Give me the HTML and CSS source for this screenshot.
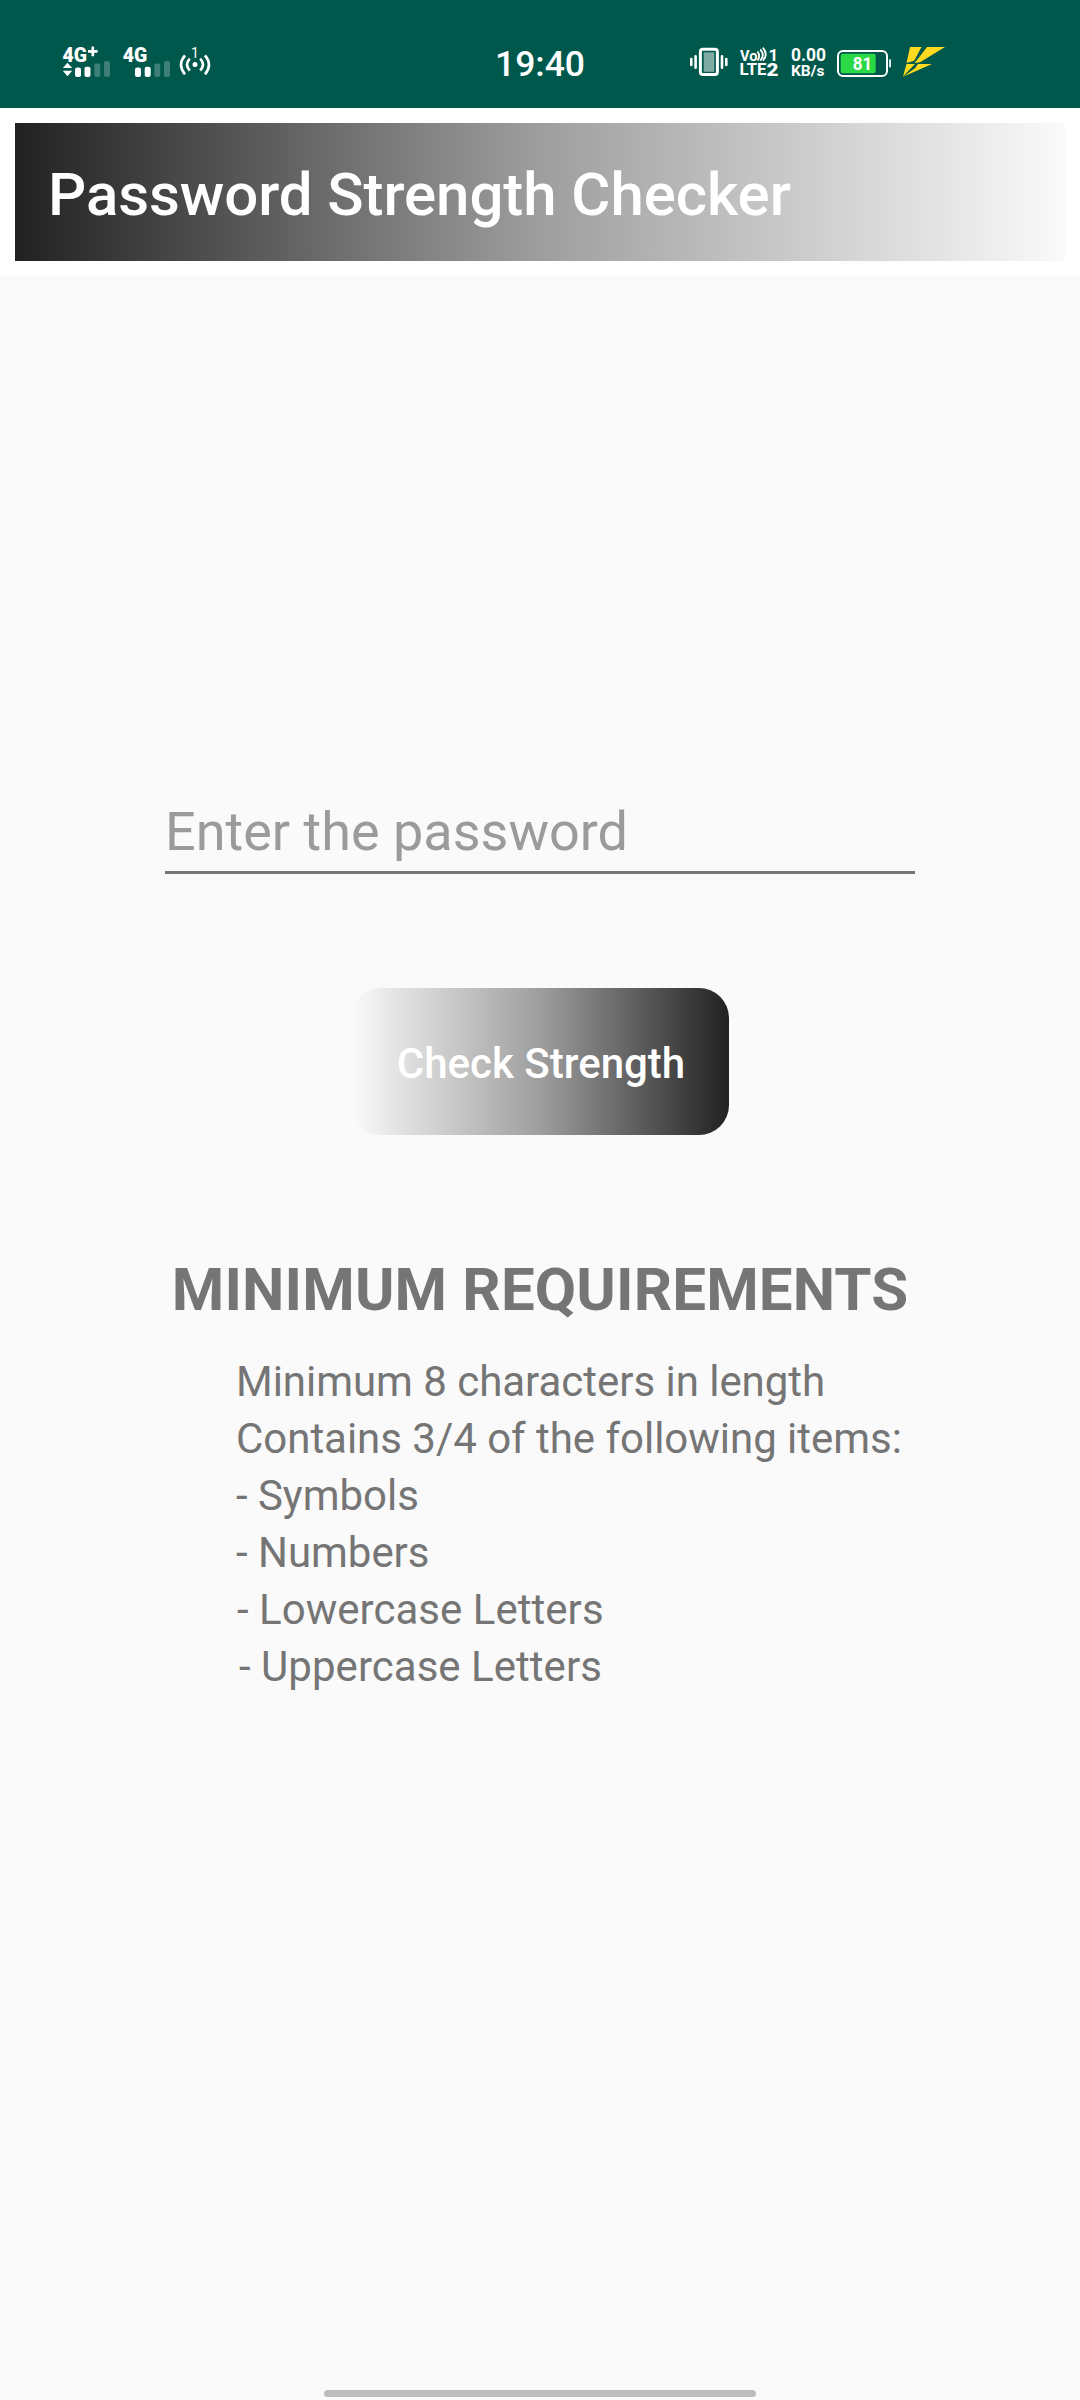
FILE: index.html
```html
<!DOCTYPE html>
<html lang="en">
<head>
<meta charset="utf-8">
<title>Password Strength Checker</title>
<link rel="stylesheet" href="styles.css">
</head>
<body>
<div class="screen">
  <div class="status">
    <svg class="icon signal-one" viewBox="60 40 54 44" width="54" height="44">
      <text x="62.5" y="61.7" font-size="20" font-weight="900" textLength="24.5" lengthAdjust="spacingAndGlyphs">4G</text>
      <path d="M88 50.1h3.5v-3.5h2.6v3.5h3.5v2.7h-3.5v3.5h-2.6v-3.5H88zM67.5 62.7l4.7 5.3h-9.4zM67.5 76.3l4.7-5.6h-9.4z"/>
      <rect x="75" y="67.5" width="6" height="9.5" rx="2"/>
      <rect x="84.5" y="66.7" width="6" height="10.3" rx="2"/>
      <g opacity=".24"><rect x="94.3" y="63.5" width="6" height="13.5" rx="2"/><rect x="104" y="61" width="6" height="16" rx="2"/></g>
    </svg>
    <svg class="icon signal-two" viewBox="120 40 54 44" width="54" height="44">
      <text x="122.7" y="61.7" font-size="20" font-weight="900" textLength="24.5" lengthAdjust="spacingAndGlyphs">4G</text>
      <rect x="135" y="67.5" width="6" height="9.5" rx="2"/>
      <rect x="144.7" y="66.7" width="6" height="10.3" rx="2"/>
      <g opacity=".24"><rect x="154.3" y="63.5" width="6" height="13.5" rx="2"/><rect x="164" y="61" width="6" height="16" rx="2"/></g>
    </svg>
    <svg class="icon hotspot" viewBox="178 40 36 44" width="36" height="44">
      <text x="195" y="58.2" font-size="14" text-anchor="middle">1</text>
      <circle cx="195" cy="64.5" r="2.5"/>
      <path class="line" d="M189.8 58.6q-5.6 6 0 12M200.2 58.6q5.6 6 0 12M185 55.3q-8 9.5 0 19M205 55.3q8 9.5 0 19"/>
    </svg>
    <span class="time">19:40</span>
    <svg class="icon vibrate" viewBox="688 40 42 44" width="42" height="44">
      <rect x="700.4" y="49.2" width="17" height="25.4" rx="2.5" fill="none" stroke="#fff" stroke-width="3"/>
      <rect x="703.7" y="52.3" width="10.6" height="19.5" opacity=".5"/>
      <path class="line" stroke-linecap="round" d="M695.6 56.2v11.6M691.3 59v6M722 56.2v11.6M726.3 59v6"/>
    </svg>
    <svg class="icon volte" viewBox="738 40 42 44" width="42" height="44">
      <text x="740" y="60.5" font-size="15.5" font-weight="700" textLength="17.5" lengthAdjust="spacingAndGlyphs">Vo</text>
      <path fill="none" stroke="#fff" stroke-width="1.8" d="M757.5 51.5q3.3 4.5 0 9M760.3 49.3q5 6 0 11.3M762.8 47.7q6 7 0 13"/>
      <text x="768.5" y="60.5" font-size="17" font-weight="700">1</text>
      <text x="739.5" y="75.3" font-size="16.5" font-weight="700" textLength="27" lengthAdjust="spacingAndGlyphs">LTE</text>
      <text x="766.5" y="75.5" font-size="18" font-weight="900" textLength="12" lengthAdjust="spacingAndGlyphs">2</text>
    </svg>
    <svg class="icon speed" viewBox="788 40 42 44" width="42" height="44">
      <text x="791" y="60.7" font-size="17.5" font-weight="700" textLength="35" lengthAdjust="spacingAndGlyphs">0.00</text>
      <text x="791" y="75.7" font-size="15" font-weight="700" textLength="33.5" lengthAdjust="spacingAndGlyphs">KB/s</text>
    </svg>
    <svg class="icon battery" viewBox="834 40 60 44" width="60" height="44">
      <rect x="838" y="51" width="49" height="25" rx="5" fill="none" stroke="#fff" stroke-width="2"/>
      <rect x="840.7" y="53.7" width="35" height="19.6" rx="2" fill="#2bd845"/>
      <rect x="889.2" y="59.3" width="1.7" height="8"/>
      <text x="852.8" y="70.2" font-size="17.5" font-weight="700" textLength="19.5" lengthAdjust="spacingAndGlyphs">81</text>
    </svg>
    <svg class="icon bolt" viewBox="900 40 48 44" width="48" height="44">
      <path fill="#fdd91f" d="M910 47h11.5l-7.3 13.7-7.7 2.2zM927 47h18L920.5 62l-6 1.3zM906.5 64h8.5L903 76.5zM918 64h14L903 76.8l12-8.5z"/>
    </svg>
  </div>
  <header class="appbar"><h1 class="title">Password Strength Checker</h1></header>
  <main class="content">
    <input class="password" type="text" placeholder="Enter the password">
    <button class="check" type="button">Check Strength</button>
    <h2 class="heading">MINIMUM REQUIREMENTS</h2>
    <ul class="rules">
      <li>Minimum 8 characters in length</li>
      <li>Contains 3/4 of the following items:</li>
      <li>- Symbols</li>
      <li>- Numbers</li>
      <li class="lower">- Lowercase Letters</li>
      <li class="upper">- Uppercase Letters</li>
    </ul>
  </main>
  <div class="handle"></div>
</div>
</body>
</html>
```
FILE: styles.css
```css
* { box-sizing: border-box; margin: 0; padding: 0; }
body { font-family: Roboto, sans-serif; background: #fafafa; }
.screen { width: 1080px; height: 2400px; display: flex; flex-direction: column; align-items: center; overflow: hidden; }

.status { width: 100%; height: 108px; flex: none; display: flex; align-items: flex-start; padding: 40px 0 0 60px; background: #00574b; color: #fff; }
.icon { flex: none; fill: #fff; font-family: Roboto, sans-serif; }
.line { fill: none; stroke: #fff; stroke-width: 2.6; }
.signal-two { margin-left: 6px; }
.hotspot { margin-left: 4px; }
.time { width: 110px; margin-left: 271px; text-align: center; font-size: 35.5px; line-height: 48px; font-weight: 500; }
.vibrate { margin-left: 93px; }
.volte { margin-left: 8px; }
.speed { margin-left: 8px; }
.battery { margin-left: 4px; }
.bolt { margin-left: 6px; }

.appbar { width: 100%; height: 168px; flex: none; border: 15px solid #fff; background: linear-gradient(90deg, #212121, #9e9e9e 50%, #fafafa) padding-box; display: flex; align-items: center; padding-left: 33px; }
.title { font-size: 60px; line-height: 70px; font-weight: 500; letter-spacing: -0.08px; color: #fff; padding-top: 5px; }

.content { flex: 1; display: flex; flex-direction: column; align-items: center; padding-top: 512px; }
.password { width: 750px; height: 86px; border: 0; border-bottom: 3px solid #757575; outline: 0; background: none; font: 400 54px/64px Roboto, sans-serif; padding-top: 4px; }
.password::placeholder { color: #9b9b9b; opacity: 1; }
.check { width: 378px; height: 147px; margin-top: 114px; border: 0; border-radius: 30px; background: linear-gradient(90deg, #fafafa, #9e9e9e 50%, #212121); color: #fff; font: 500 42px/50px Roboto, sans-serif; padding: 5px 0 0 2px; }
.heading { margin-top: 120px; font-size: 60px; line-height: 70px; font-weight: 700; letter-spacing: 0.14px; color: #757575; }
.rules { width: 672px; margin-top: 28px; align-self: flex-start; margin-left: 71px; list-style: none; font-size: 42px; line-height: 57px; letter-spacing: -0.03px; color: #757575; }
.lower { padding-left: 1px; letter-spacing: 0.03px; }
.upper { padding-left: 3px; letter-spacing: 0.03px; }

.handle { width: 432px; height: 7px; flex: none; margin-bottom: 3px; border-radius: 4px; background: #bdbdbd; }
```
